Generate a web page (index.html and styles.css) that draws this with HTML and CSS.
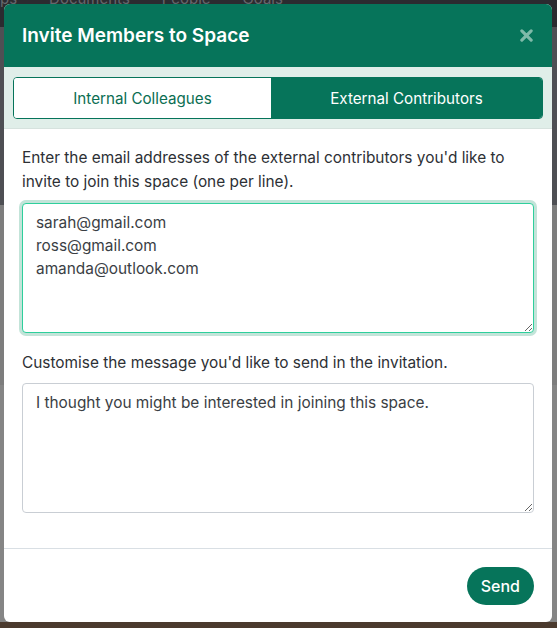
FILE: index.html
```html
<!DOCTYPE html>
<html lang="en">

<head>
    <meta charset="UTF-8">
    <meta name="viewport" content="width=device-width, initial-scale=1.0">
    <title>Invite Members to Space</title>
    <link rel="stylesheet" href="styles.css">
</head>

<body>
    <div class="backdrop">
        <div class="app-nav">
            <span>ps</span>
            <span>Documents</span>
            <span>People</span>
            <span>Goals</span>
        </div>
    </div>

    <div class="modal">
        <div class="modal-header">
            <h1>Invite Members to Space</h1>
            <button class="close" aria-label="Close">
                <svg width="13" height="13" viewBox="0 0 14 14">
                    <path d="M2 2 L12 12 M12 2 L2 12" stroke="currentColor" stroke-width="3.4" stroke-linecap="round" />
                </svg>
            </button>
        </div>

        <div class="tab-bar">
            <div class="tabs">
                <button class="tab">Internal Colleagues</button>
                <button class="tab active">External Contributors</button>
            </div>
        </div>

        <div class="modal-body">
            <p>Enter the email addresses of the external contributors you'd like to invite to join this space (one per line).</p>
            <textarea class="field focused" rows="5">sarah@gmail.com
ross@gmail.com
amanda@outlook.com</textarea>

            <p class="second">Customise the message you'd like to send in the invitation.</p>
            <textarea class="field" rows="5">I thought you might be interested in joining this space.</textarea>
        </div>

        <div class="modal-footer">
            <button class="send">Send</button>
        </div>
    </div>
</body>

</html>
```

FILE: styles.css
```css
body {
    font-family: Inter, "Noto Sans", sans-serif;
    color: #2d3035;
    margin: 0;
    padding: 4px 5px 6px 4px;
    background: linear-gradient(to bottom,
        #2b2b30 0, #2b2b30 27px,
        #4e4f54 27px, #4e4f54 205px,
        #7d7d7d 205px, #7d7d7d 385px,
        #858585 385px, #858585 622px,
        #4b3a2e 622px);
    overflow: hidden;
}

.backdrop {
    position: absolute;
    top: 0;
    left: 0;
    right: 0;
}

.app-nav {
    display: flex;
    gap: 32px;
    margin-top: -11px;
    color: #66666c;
    font-size: 15px;
}

.modal {
    position: relative;
    width: 548px;
    background-color: #fff;
    border-radius: 6px;
    overflow: hidden;
}

.modal-header {
    display: flex;
    align-items: center;
    justify-content: space-between;
    height: 63px;
    padding: 0 19px 0 18px;
    background-color: #06745a;
}

.modal-header h1 {
    margin: 0;
    color: #fff;
    font-size: 19px;
    font-weight: 600;
}

.close {
    display: flex;
    padding: 0;
    border: none;
    background: none;
    color: #7fbaa9;
    cursor: pointer;
}

.tab-bar {
    padding: 10px 9px 9px;
    background-color: #e0eee9;
    border-bottom: 1px solid #d6e2de;
}

.tabs {
    display: flex;
    box-sizing: border-box;
    height: 42px;
    border: 1px solid #06745a;
    border-radius: 4px;
    overflow: hidden;
}

.tab {
    flex: 1 1 auto;
    border: none;
    background-color: #fff;
    color: #0b6e52;
    font-family: inherit;
    font-size: 15.2px;
    cursor: pointer;
}

.tab.active {
    background-color: #06745a;
    color: #fff;
}

.modal-body {
    padding: 17px 18px 35px;
    border-bottom: 1px solid #d9dfe4;
}

.modal-body p {
    margin: 0 0 9px;
    font-size: 15.4px;
    line-height: 24px;
}

.modal-body p.second {
    margin-top: 18px;
    margin-bottom: 8px;
}

.field {
    display: block;
    box-sizing: border-box;
    width: 100%;
    height: 130px;
    margin: 0;
    padding: 7px 13px;
    border: 1px solid #c9ced4;
    border-radius: 4px;
    font-family: inherit;
    font-size: 15.4px;
    line-height: 23px;
    color: #3a3e44;
    resize: vertical;
}

.field.focused {
    border-color: #2ecf9c;
    box-shadow: 0 0 0 3px #c3e4d9;
    outline: none;
}

.modal-footer {
    display: flex;
    justify-content: flex-end;
    padding: 18px 18px 17px;
}

.send {
    height: 38px;
    padding: 0 14px;
    border: none;
    border-radius: 19px;
    background-color: #06745a;
    color: #fff;
    font-family: inherit;
    font-size: 16px;
    font-weight: 500;
    cursor: pointer;
}
```
